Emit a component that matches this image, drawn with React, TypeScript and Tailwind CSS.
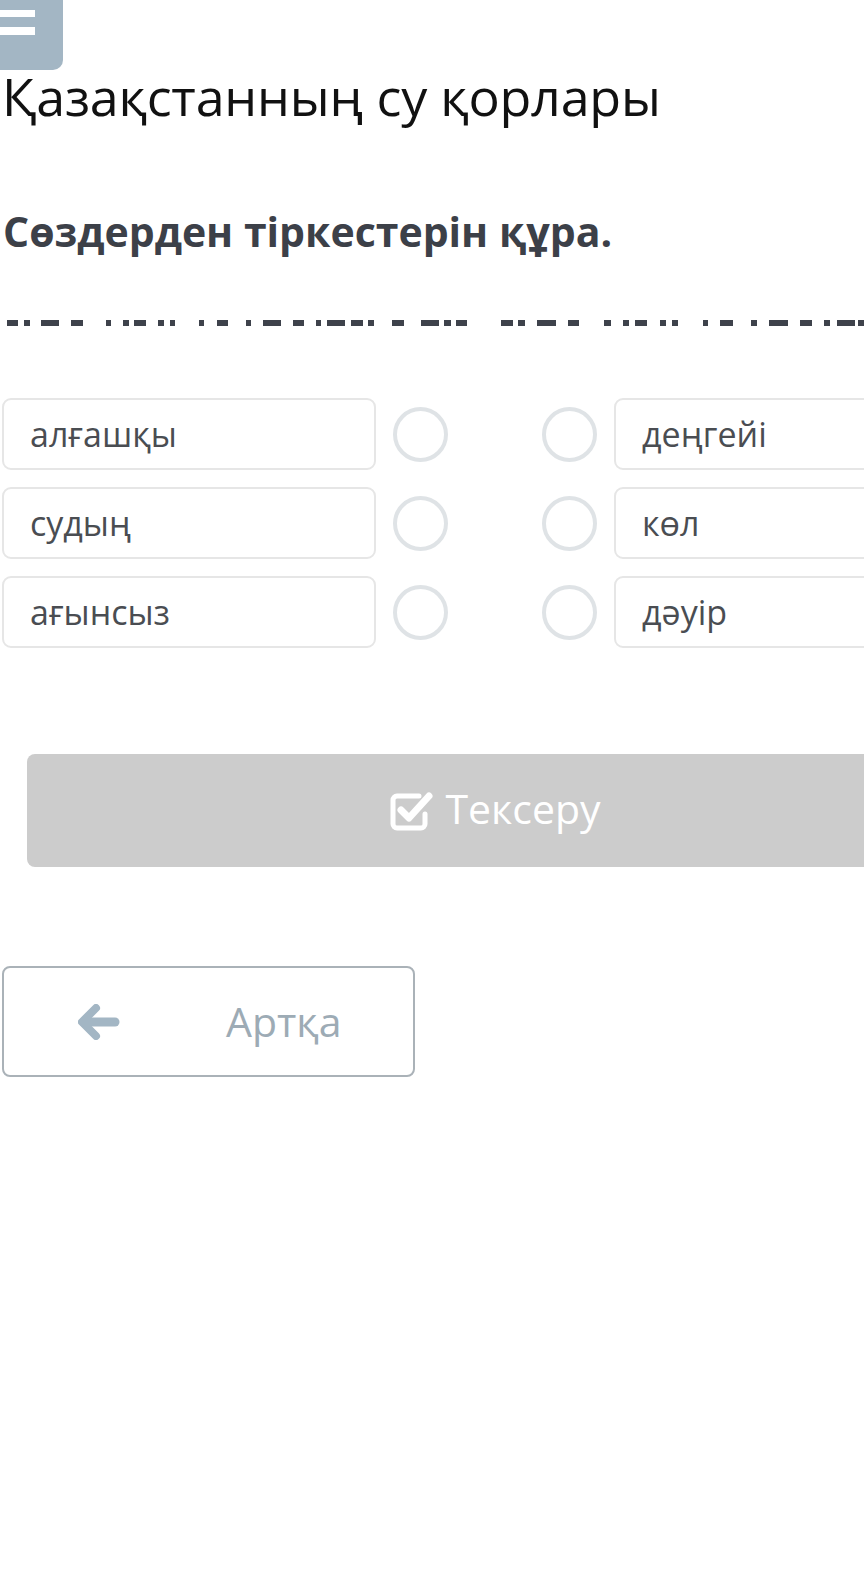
import React from "react";

const dashes: [number, number][] = [
  [7, 18], [24, 30], [41, 59], [71, 83], [106, 111], [123, 129], [134, 146], [158, 164], [170, 175],
  [199, 204], [217, 228], [246, 251], [263, 281], [293, 304], [316, 321], [327, 345], [351, 363],
  [368, 374], [392, 404], [421, 439], [444, 451], [456, 467], [501, 513], [518, 525], [537, 556],
  [568, 579], [604, 611], [623, 629], [635, 647], [660, 666], [672, 678], [703, 708], [720, 733],
  [751, 757], [769, 788], [800, 812], [824, 830], [837, 855], [858, 864],
];

const left = ["алғашқы", "судың", "ағынсыз"];
const right = ["деңгейі", "көл", "дәуір"];

function Circle() {
  return <div className="w-[55px] h-[55px] shrink-0 rounded-full border-[4px] border-[#dfe3e6]" />;
}

function Box({ text, w }: { text: string; w: string }) {
  return (
    <div
      className={`${w} h-[72px] shrink-0 rounded-[9px] border-2 border-[#e6e6e6] flex items-center pl-[26px] text-[34px] text-[#4a4d52]`}
    >
      {text}
    </div>
  );
}

export default function App() {
  return (
    <div
      className="w-[864px] h-[1587px] overflow-hidden bg-white"
      style={{ fontFamily: '"Open Sans", "Noto Sans", sans-serif' }}
    >
      <div className="w-[63px] h-[70px] bg-[#a3b6c4] rounded-br-[10px] flex flex-col pt-[10px] gap-[10px] overflow-hidden">
        <div className="w-[35px] h-[7px] bg-white" />
        <div className="w-[35px] h-[8px] bg-white" />
      </div>
      <h1 className="ml-[2px] text-[52px] leading-[56px] text-[#111111] font-normal -mt-[2px] tracking-[-0.2px]">
        Қазақстанның су қорлары
      </h1>
      <h2 className="ml-[3px] mt-[83px] text-[41px] leading-[48px] font-bold text-[#3c4048]">
        Сөздерден тіркестерін құра.
      </h2>
      <svg className="block mt-[65px]" width="864" height="7" viewBox="0 0 864 7">
        {dashes.map(([a, b], i) => (
          <rect key={i} x={a} y={0} width={b - a} height={6} fill="#3e424b" />
        ))}
      </svg>
      <div className="mt-[71px] flex flex-col gap-[17px]">
        {left.map((l, i) => (
          <div key={i} className="flex items-center ml-[2px]">
            <Box text={l} w="w-[374px]" />
            <div className="ml-[17px]"><Circle /></div>
            <div className="ml-[94px]"><Circle /></div>
            <div className="ml-[17px]"><Box text={right[i]} w="w-[320px]" /></div>
          </div>
        ))}
      </div>
      <div className="ml-[27px] mt-[106px] w-[936px] h-[113px] bg-[#cccccc] rounded-[8px] flex items-center justify-center gap-[10px] text-white">
        <svg width="46" height="42" viewBox="0 0 46 42" fill="none">
          <path d="M30 6 H8 a4 4 0 0 0 -4 4 v24 a4 4 0 0 0 4 4 h24 a4 4 0 0 0 4 -4 v-10" stroke="white" strokeWidth="5" strokeLinecap="round" />
          <path d="M12 20 L20 28 L40 6" stroke="white" strokeWidth="7" strokeLinecap="round" strokeLinejoin="round" />
        </svg>
        <span className="text-[41px] leading-none -mt-[4px]">Тексеру</span>
      </div>
      <div className="ml-[2px] mt-[99px] w-[413px] h-[111px] rounded-[8px] border-2 border-[#aab2b8] flex items-center">
        <svg className="ml-[74px]" width="42" height="36" viewBox="0 0 42 36" fill="none">
          <path d="M18 4 L4 18 L18 32" stroke="#a3b6c4" strokeWidth="8" strokeLinecap="round" strokeLinejoin="round" />
          <path d="M6 18 H37" stroke="#a3b6c4" strokeWidth="9" strokeLinecap="round" />
        </svg>
        <span className="ml-[106px] text-[41px] leading-none text-[#9dabb5]">Артқа</span>
      </div>
    </div>
  );
}
